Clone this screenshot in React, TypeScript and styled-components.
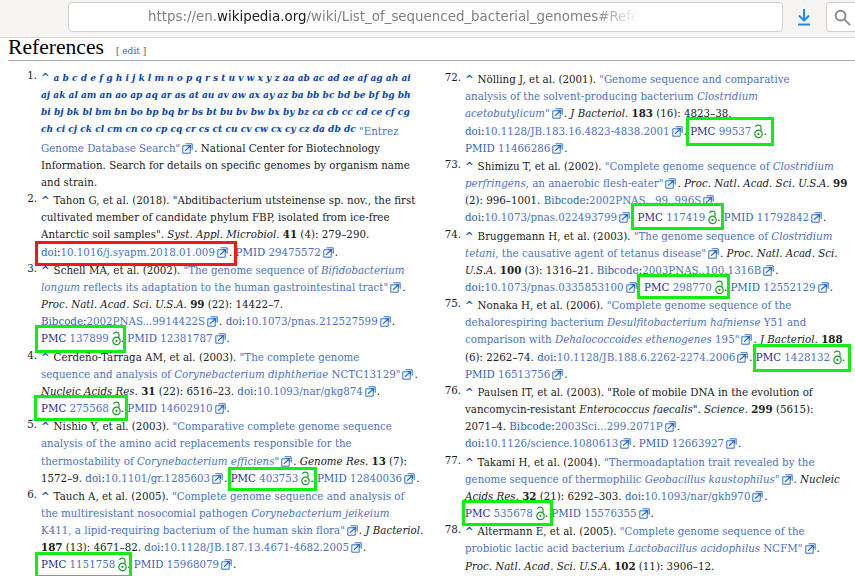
import React from "react";
import styled, { createGlobalStyle } from "styled-components";

const Global = createGlobalStyle`
  html, body { margin: 0; padding: 0; background: #fff; overflow: hidden; }
  body { width: 855px; height: 576px; font-family: "DejaVu Serif", serif; }
`;
const Page = styled.div`width: 855px; height: 576px; overflow: hidden; background: #fff; display: flex; flex-direction: column;`;
const Toolbar = styled.header`
  flex: none; background: #f6f5f3; border-bottom: 1px solid #d6d3ce; box-sizing: border-box; height: 38px;
  display: flex; align-items: flex-start; padding: 2px 0 0 68px; overflow: hidden;
`;
const UrlBox = styled.div`
  flex: none; width: 715px; height: 30px; box-sizing: border-box; background: #fff; border: 1px solid #d2cfc9; border-radius: 4px;
  font: 13.4px/28px "DejaVu Sans", sans-serif; color: #808080; padding-left: 79px; white-space: nowrap; overflow: hidden;
  b { font-weight: 400; color: #1a1a1a; }
`;
const UrlText = styled.span`
  display: inline-block; vertical-align: top;
  mask-image: linear-gradient(to right, #000 91%, transparent 100%);
`;
const DownloadBtn = styled.div`flex: none; width: 22px; height: 30px; margin-left: 10px; display: flex; align-items: center; justify-content: center;`;
const SearchBox = styled.div`
  flex: none; width: 40px; height: 30px; margin-left: 11px; box-sizing: border-box; background: #fff; border: 1px solid #d2cfc9; border-right: none; border-radius: 4px 0 0 4px;
  display: flex; align-items: center; padding-left: 7px;
`;
const Content = styled.main`flex: 1; padding: 0 0 0 8px; min-height: 0; font-size: 10.27px; color: #202122;`;
const Heading = styled.h2`
  margin: 0; height: 23px; box-sizing: border-box; border-bottom: 1px solid #a2a9b1; font: 400 21.6px/18px "Liberation Serif", serif; color: #000; white-space: nowrap;
`;
const EditLink = styled.span`font: 9px "DejaVu Serif", serif; color: #54595d; margin-left: 12px; a { color: #3366cc; }`;
const Columns = styled.div`display: grid; grid-template-columns: 424px 1fr; padding-top: 8px;`;
const RefList = styled.ol<{ $top?: number }>`list-style: none; margin: 0; padding: ${(p) => p.$top ?? 0}px 0 0;`;
const RefItem = styled.li`position: relative; padding-left: 33px; display: block;`;
const Num = styled.span`position: absolute; right: calc(100% - 29px); white-space: nowrap;`;
const Line = styled.div<{ $h?: number; $lh?: number }>`height: ${(p) => p.$h ?? 17}px; line-height: ${(p) => p.$lh ?? 17}px; white-space: nowrap; position: relative;`;
const Caret = styled.span`color: #0645ad; font-weight: 700; margin-right: 4px;`;
const BackLinks = styled.span<{ $raised?: boolean }>`
  font: italic 700 9.05px "DejaVu Serif", serif; color: #0645ad;
  position: relative; top: ${(p) => (p.$raised ? -3 : 0)}px;
`;
const A = styled.span`color: #4a72c6;`;
const Label = styled.span`color: #2f5fb8;`;
const Dark = styled.span`color: #2a1f98;`;
const ExtWrap = styled.svg`width: 11px; height: 11px; margin: 0 1px 0 2px; vertical-align: -1.5px;`;
const Box = styled.span<{ $c?: string; $l?: number; $r?: number; $t?: number; $b?: number }>`
  position: relative;
  &::after { content: ""; position: absolute; left: ${(p) => -(p.$l ?? 6)}px; right: ${(p) => -(p.$r ?? 5)}px;
    top: calc(50% - ${(p) => p.$t ?? 13}px); bottom: calc(50% - ${(p) => p.$b ?? 13}px);
    border: 3px solid ${(p) => p.$c ?? "#10f010"}; pointer-events: none; }
`;
const Lock = styled.svg`width: 9px; height: 15px; margin: 0 0 0 3px; vertical-align: -4px;`;

const Ext = () => (
  <ExtWrap viewBox="0 0 11 11" fill="none" stroke="#2f6fc9" strokeWidth="1">
    <path d="M0.8 2.8h7.4v7.4H0.8z" />
    <path d="M3.5 0.8h6.7v6" />
    <path d="M3 7.8 L8.3 3 M5.6 2.6h3v3" strokeWidth="1.2" />
  </ExtWrap>
);
const OA = () => (
  <Lock viewBox="0 0 9 15" fill="none" stroke="#1d9a2a" strokeWidth="1.2">
    <path d="M1.6 3 C2 0.6 6.6 0.6 7 3 L7 6.4" />
    <circle cx="4.5" cy="9.9" r="3.7" />
    <circle cx="4.5" cy="9.9" r="1.1" fill="#1d9a2a" stroke="none" />
  </Lock>
);
const Ref = ({ n, children }: { n: number; children: React.ReactNode }) => (
  <RefItem><Num>{n}.</Num>{children}</RefItem>
);
const Up = () => <Caret>^</Caret>;
const Pmc = ({ n, l, r, t, b }: { n: string; l: number; r: number; t: number; b: number }) => (
  <Box $l={l} $r={r} $t={t} $b={b}><Dark>PMC</Dark> <A>{n}</A><OA /></Box>
);
const Doi = ({ v }: { v: string }) => (<><Label>doi</Label>:<A>{v}</A><Ext /></>);
const Pmid = ({ v }: { v: string }) => (<><Label>PMID</Label> <A>{v}</A><Ext /></>);
const Bib = ({ v }: { v: string }) => (<><Label>Bibcode</Label>:<A>{v}</A><Ext /></>);

export default function App() {
  return (
    <Page>
      <Global />
      <Toolbar>
        <UrlBox><UrlText>https://en.<b>wikipedia.org</b>/wiki/List_of_sequenced_bacterial_genomes#Refe</UrlText></UrlBox>
        <DownloadBtn>
          <svg width="14" height="18" viewBox="0 0 14 18" fill="none" stroke="#1a8cf0" strokeWidth="2"><path d="M7 1v11M2 7.5l5 5 5-5" /><path d="M1 16.5h12" /></svg>
        </DownloadBtn>
        <SearchBox>
          <svg width="17" height="17" viewBox="0 0 18 18" fill="none" stroke="#8a8a8a" strokeWidth="2"><circle cx="7" cy="7" r="5.2" /><path d="M11 11l6 6" /></svg>
        </SearchBox>
      </Toolbar>
      <Content>
        <Heading>References<EditLink>[ <a>edit</a> ]</EditLink></Heading>
        <Columns>
          <RefList>
            <Ref n={1}>
              <Line><Up /><BackLinks>a b c d e f g h i j k l m n o p q r s t u v w x y z aa ab ac ad ae af ag ah ai</BackLinks></Line>
              <Line><BackLinks>aj ak al am an ao ap aq ar as at au av aw ax ay az ba bb bc bd be bf bg bh</BackLinks></Line>
              <Line><BackLinks>bi bj bk bl bm bn bo bp bq br bs bt bu bv bw bx by bz ca cb cc cd ce cf cg</BackLinks></Line>
              <Line $h={20} $lh={23}><BackLinks $raised>ch ci cj ck cl cm cn co cp cq cr cs ct cu cv cw cx cy cz da db dc</BackLinks> <A>"Entrez</A></Line>
              <Line><A>Genome Database Search"</A><Ext />. National Center for Biotechnology</Line>
              <Line>Information. Search for details on specific genomes by organism name</Line>
              <Line $h={18}>and strain.</Line>
            </Ref>
            <Ref n={2}>
              <Line><Up />Tahon G, et al. (2018). "Abditibacterium utsteinense sp. nov., the first</Line>
              <Line>cultivated member of candidate phylum FBP, isolated from ice-free</Line>
              <Line $h={18}>Antarctic soil samples". <i>Syst. Appl. Microbiol.</i> <b>41</b> (4): 279–290.</Line>
              <Line $h={18}><Box $c="#f01818" $l={6} $r={5} $t={11} $b={14}><Doi v="10.1016/j.syapm.2018.01.009" />.</Box> <Pmid v="29475572" />.</Line>
            </Ref>
            <Ref n={3}>
              <Line><Up />Schell MA, et al. (2002). <A>"The genome sequence of <i>Bifidobacterium</i></A></Line>
              <Line><A><i>longum</i> reflects its adaptation to the human gastrointestinal tract"</A><Ext />.</Line>
              <Line><i>Proc. Natl. Acad. Sci. U.S.A.</i> <b>99</b> (22): 14422–7.</Line>
              <Line><Bib v="2002PNAS...9914422S" />. <Doi v="10.1073/pnas.212527599" />.</Line>
              <Line $h={19}><Pmc n="137899" l={6} r={5} t={13} b={15} />. <Pmid v="12381787" />.</Line>
            </Ref>
            <Ref n={4}>
              <Line><Up />Cerdeño-Tárraga AM, et al. (2003). <A>"The complete genome</A></Line>
              <Line><A>sequence and analysis of <i>Corynebacterium diphtheriae</i> NCTC13129"</A><Ext />.</Line>
              <Line><i>Nucleic Acids Res.</i> <b>31</b> (22): 6516–23. <Doi v="10.1093/nar/gkg874" />.</Line>
              <Line $h={18}><Pmc n="275568" l={7} r={7} t={13} b={13} />. <Pmid v="14602910" />.</Line>
            </Ref>
            <Ref n={5}>
              <Line><Up />Nishio Y, et al. (2003). <A>"Comparative complete genome sequence</A></Line>
              <Line $h={18}><A>analysis of the amino acid replacements responsible for the</A></Line>
              <Line><A>thermostability of <i>Corynebacterium efficiens</i>"</A><Ext />. <i>Genome Res.</i> <b>13</b> (7):</Line>
              <Line $h={18}>1572–9. <Doi v="10.1101/gr.1285603" />. <Pmc n="403753" l={3} r={7} t={11} b={13} />. <Pmid v="12840036" />.</Line>
            </Ref>
            <Ref n={6}>
              <Line><Up />Tauch A, et al. (2005). <A>"Complete genome sequence and analysis of</A></Line>
              <Line><A>the multiresistant nosocomial pathogen <i>Corynebacterium jeikeium</i></A></Line>
              <Line><A>K411, a lipid-requiring bacterium of the human skin flora"</A><Ext />. <i>J Bacteriol.</i></Line>
              <Line><b>187</b> (13): 4671–82. <Doi v="10.1128/JB.187.13.4671-4682.2005" />.</Line>
              <Line><Pmc n="1151758" l={6} r={5} t={12} b={14} />. <Pmid v="15968079" />.</Line>
            </Ref>
          </RefList>
          <RefList $top={2}>
            <Ref n={72}>
              <Line><Up />Nölling J, et al. (2001). <A>"Genome sequence and comparative</A></Line>
              <Line><A>analysis of the solvent-producing bacterium <i>Clostridium</i></A></Line>
              <Line $h={18}><A><i>acetobutylicum</i>"</A><Ext />. <i>J Bacteriol.</i> <b>183</b> (16): 4823–38.</Line>
              <Line><Doi v="10.1128/JB.183.16.4823-4838.2001" />. <Pmc n="99537" l={4} r={11} t={14} b={15} />.</Line>
              <Line $h={18}><Pmid v="11466286" />.</Line>
            </Ref>
            <Ref n={73}>
              <Line><Up />Shimizu T, et al. (2002). <A>"Complete genome sequence of <i>Clostridium</i></A></Line>
              <Line><A><i>perfringens</i>, an anaerobic flesh-eater"</A><Ext />. <i>Proc. Natl. Acad. Sci. U.S.A.</i> <b>99</b></Line>
              <Line>(2): 996–1001. <Bib v="2002PNAS...99..996S" />.</Line>
              <Line $h={19}><Doi v="10.1073/pnas.022493799" />. <Pmc n="117419" l={7} r={7} t={14} b={13} />. <Pmid v="11792842" />.</Line>
            </Ref>
            <Ref n={74}>
              <Line><Up />Bruggemann H, et al. (2003). <A>"The genome sequence of <i>Clostridium</i></A></Line>
              <Line><A><i>tetani</i>, the causative agent of tetanus disease"</A><Ext />. <i>Proc. Natl. Acad. Sci.</i></Line>
              <Line><i>U.S.A.</i> <b>100</b> (3): 1316–21. <Bib v="2003PNAS..100.1316B" />.</Line>
              <Line $h={18}><Doi v="10.1073/pnas.0335853100" />. <Pmc n="298770" l={7} r={6} t={13} b={12} />. <Pmid v="12552129" />.</Line>
            </Ref>
            <Ref n={75}>
              <Line><Up />Nonaka H, et al. (2006). <A>"Complete genome sequence of the</A></Line>
              <Line><A>dehalorespiring bacterium <i>Desulfitobacterium hafniense</i> Y51 and</A></Line>
              <Line $h={18}><A>comparison with <i>Dehalococcoides ethenogenes</i> 195"</A><Ext />. <i>J Bacteriol.</i> <b>188</b></Line>
              <Line>(6): 2262–74. <Doi v="10.1128/JB.188.6.2262-2274.2006" />. <Pmc n="1428132" l={3} r={9} t={13} b={15} />.</Line>
              <Line $h={18}><Pmid v="16513756" />.</Line>
            </Ref>
            <Ref n={76}>
              <Line><Up />Paulsen IT, et al. (2003). "Role of mobile DNA in the evolution of</Line>
              <Line>vancomycin-resistant <i>Enterococcus faecalis</i>". <i>Science.</i> <b>299</b> (5615):</Line>
              <Line>2071–4. <Bib v="2003Sci...299.2071P" />.</Line>
              <Line $h={19}><Doi v="10.1126/science.1080613" />. <Pmid v="12663927" />.</Line>
            </Ref>
            <Ref n={77}>
              <Line><Up />Takami H, et al. (2004). <A>"Thermoadaptation trait revealed by the</A></Line>
              <Line><A>genome sequence of thermophilic <i>Geobacillus kaustophilus</i>"</A><Ext />. <i>Nucleic</i></Line>
              <Line><i>Acids Res.</i> <b>32</b> (21): 6292–303. <Doi v="10.1093/nar/gkh970" />.</Line>
              <Line $h={18}><Pmc n="535678" l={3} r={8} t={13} b={13} />. <Pmid v="15576355" />.</Line>
            </Ref>
            <Ref n={78}>
              <Line><Up />Altermann E, et al. (2005). <A>"Complete genome sequence of the</A></Line>
              <Line $h={18}><A>probiotic lactic acid bacterium <i>Lactobacillus acidophilus</i> NCFM"</A><Ext />.</Line>
              <Line><i>Proc. Natl. Acad. Sci. U.S.A.</i> <b>102</b> (11): 3906–12.</Line>
            </Ref>
          </RefList>
        </Columns>
      </Content>
    </Page>
  );
}
